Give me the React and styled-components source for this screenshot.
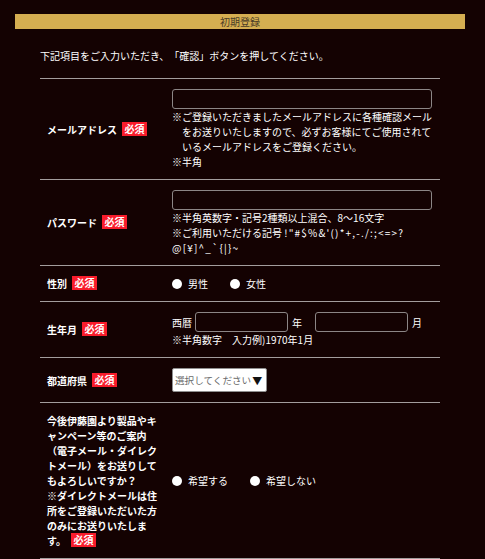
import React from 'react'
import styled, { createGlobalStyle } from 'styled-components'

const GlobalStyle = createGlobalStyle`
  body {
    margin: 0;
    background: #140202;
    color: #fff;
    font-family: "Noto Sans CJK JP", "Noto Sans", sans-serif;
    font-size: 10px;
    line-height: 15px;
    text-spacing-trim: space-all;
  }
`

const Page = styled.div`
  padding: 14px 20px 0 15px;
`

const TitleBar = styled.h1`
  background: #d5ae51;
  color: #4a3c26;
  font-size: 10px;
  font-weight: 400;
  height: 15px;
  line-height: 15px;
  margin: 0;
  text-align: center;
`

const Form = styled.div`
  margin: 0 25px;
  padding-top: 19px;
`

const Intro = styled.p`
  margin: 0 0 15px;
`

const Table = styled.div`
  border-top: 1px solid #a39d9d;
`

const Row = styled.div`
  border-bottom: 1px solid #a39d9d;
  display: grid;
  grid-template-columns: 132px 1fr;
`

const LabelCell = styled.div`
  align-items: center;
  display: flex;
  font-weight: 700;
  padding: 10px 12px 10px 7px;
`

const Badge = styled.span`
  background: #f81c2b;
  color: #fff;
  display: inline-block;
  font-weight: 700;
  line-height: 14px;
  margin-left: 5px;
  padding: 0 2.5px;
  vertical-align: top;
`

const ValueCell = styled.div`
  display: flex;
  flex-direction: column;
  justify-content: center;
  padding: 10px 8px 10px 0;
`

const TextInput = styled.input`
  background: transparent;
  border: 1px solid #8c8686;
  border-radius: 3px;
  box-sizing: border-box;
  color: #fff;
  display: block;
  flex-shrink: 0;
  height: 20px;
  margin: 0;
  padding: 0 4px;
  width: ${p => p.width}px;
`

const Note = styled.p`
  margin: 0;
  padding-left: ${p => (p.hanging ? '1em' : '0')};
  text-indent: ${p => (p.hanging ? '-1em' : '0')};
`

const Symbols = styled.span`
  letter-spacing: 1.2px;
`

const Options = styled.div`
  align-items: center;
  display: flex;
`

const Option = styled.label`
  align-items: center;
  cursor: pointer;
  display: inline-flex;
  margin-right: 22px;
`

const Dot = styled.span`
  background: #fff;
  border-radius: 50%;
  display: inline-block;
  height: 10px;
  margin-right: 6px;
  width: 10px;
`

const DateLine = styled.div`
  align-items: center;
  display: flex;
  white-space: nowrap;
`

const DateInput = styled(TextInput)`
  margin: 0 ${p => p.after}px 0 3px;
`

const YearUnit = styled.span`
  margin-right: 10px;
`

const SelectBox = styled.div`
  align-items: center;
  background: #fff;
  border: 1px solid #8f8f8f;
  border-radius: 2px;
  box-sizing: border-box;
  display: flex;
  height: 24px;
  overflow: hidden;
  padding-left: 2px;
  white-space: nowrap;
  width: 95px;
`

const Placeholder = styled.span`
  color: #6a6a6a;
  font-size: 9.6px;
`

const Caret = styled.span`
  color: #111;
  flex-shrink: 0;
  font-size: 10px;
  margin-left: 1px;
`

const Required = () => <Badge>必須</Badge>

const RadioGroup = ({ options }) => (
  <Options>
    {options.map(option => (
      <Option key={option}>
        <Dot />
        {option}
      </Option>
    ))}
  </Options>
)

export default function App() {
  return (
    <>
      <GlobalStyle />
      <Page>
        <TitleBar>初期登録</TitleBar>
        <Form>
          <Intro>下記項目をご入力いただき、「確認」ボタンを押してください。</Intro>
          <Table>
            <Row>
              <LabelCell>
                <div>
                  メールアドレス
                  <Required />
                </div>
              </LabelCell>
              <ValueCell>
                <TextInput type="text" width={260} />
                <Note hanging>
                  ※ご登録いただきましたメールアドレスに各種確認メールをお送りいたしますので、必ずお客様にてご使用されているメールアドレスをご登録ください。
                </Note>
                <Note hanging>※半角</Note>
              </ValueCell>
            </Row>
            <Row>
              <LabelCell>
                <div>
                  パスワード
                  <Required />
                </div>
              </LabelCell>
              <ValueCell>
                <TextInput type="password" width={260} />
                <Note>※半角英数字・記号2種類以上混合、8～16文字</Note>
                <Note>
                  ※ご利用いただける記号 <Symbols>!&quot;#$%&amp;&#39;()*+,-./:;&lt;=&gt;?</Symbols>
                  <br />
                  <Symbols>@[¥]^_`{'{'}|{'}'}~</Symbols>
                </Note>
              </ValueCell>
            </Row>
            <Row>
              <LabelCell>
                <div>
                  性別
                  <Required />
                </div>
              </LabelCell>
              <ValueCell>
                <RadioGroup options={['男性', '女性']} />
              </ValueCell>
            </Row>
            <Row>
              <LabelCell>
                <div>
                  生年月
                  <Required />
                </div>
              </LabelCell>
              <ValueCell>
                <DateLine>
                  西暦
                  <DateInput type="text" width={93} after={4} />
                  <YearUnit>年</YearUnit>
                  <DateInput type="text" width={93} after={4} />
                  月
                </DateLine>
                <Note>※半角数字　入力例)1970年1月</Note>
              </ValueCell>
            </Row>
            <Row>
              <LabelCell>
                <div>
                  都道府県
                  <Required />
                </div>
              </LabelCell>
              <ValueCell>
                <SelectBox>
                  <Placeholder>選択してください</Placeholder>
                  <Caret>▼</Caret>
                </SelectBox>
              </ValueCell>
            </Row>
            <Row>
              <LabelCell>
                <div>
                  今後伊藤園より製品やキャンペーン等のご案内（電子メール・ダイレクトメール）をお送りしてもよろしいですか？
                  <br />
                  ※ダイレクトメールは住所をご登録いただいた方のみにお送りいたします。
                  <Required />
                </div>
              </LabelCell>
              <ValueCell>
                <RadioGroup options={['希望する', '希望しない']} />
              </ValueCell>
            </Row>
          </Table>
        </Form>
      </Page>
    </>
  )
}
